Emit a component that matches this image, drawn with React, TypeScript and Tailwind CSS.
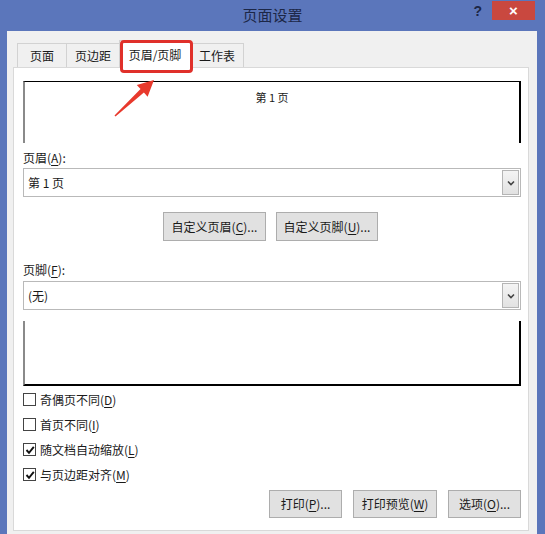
import React from "react";

function Chevron() {
  return (
    <svg width="8" height="6" viewBox="0 0 8 6">
      <path d="M1 1.5 L4 4.5 L7 1.5" fill="none" stroke="#444" strokeWidth="1.6" />
    </svg>
  );
}

function Select({ value }: { value: string }) {
  return (
    <div className="h-[29px] border border-[#b9b9b9] bg-white flex items-center justify-between pl-[4px] pr-[1px]">
      <span>{value}</span>
      <div className="w-[17px] h-[25px] border border-[#b5b5b5] bg-gradient-to-b from-[#f4f4f4] to-[#e2e2e2] flex items-center justify-center">
        <Chevron />
      </div>
    </div>
  );
}

function Check({ checked, children }: { checked?: boolean; children: React.ReactNode }) {
  return (
    <div className="h-[25px] flex items-center">
      <div className="w-[13px] h-[13px] border border-[#444] bg-white flex items-center justify-center">
        {checked && (
          <svg width="10" height="10" viewBox="0 0 10 10">
            <path d="M1.5 5 L4 7.8 L8.8 1.8" fill="none" stroke="#111" strokeWidth="1.9" />
          </svg>
        )}
      </div>
      <span className="ml-[4px]">{children}</span>
    </div>
  );
}

function Btn({ w, children }: { w: string; children: React.ReactNode }) {
  return (
    <div className={`${w} h-full border border-[#adadad] bg-[#e1e1e1] flex items-center justify-center`}>
      {children}
    </div>
  );
}

export default function App() {
  return (
    <div className="relative w-[545px] h-[534px] overflow-hidden bg-[#5b76bb] flex flex-col text-[12px] leading-[16px] text-[#1a1a1a] font-['Noto_Sans_CJK_SC','Noto_Sans',sans-serif]">
      {/* title bar */}
      <div className="h-[31px] grid grid-cols-[1fr_auto_1fr] items-start">
        <div />
        <div className="pt-[5px] text-[15px] leading-[20px] text-[#1c2747]">页面设置</div>
        <div className="flex justify-end items-start pr-[10px]">
          <span className="mt-[3px] mr-[10px] text-[14px] leading-[16px] font-bold text-[#1c2747] font-['Liberation_Sans',sans-serif]">?</span>
          <div className="mt-[1px] w-[43px] h-[19px] bg-[#c9483f] flex items-center justify-center text-white text-[15px] font-bold font-['Liberation_Sans',sans-serif]">
            ×
          </div>
        </div>
      </div>

      {/* window body */}
      <div className="ml-[7px] mr-[8px] flex-1 bg-[#f0f0f0] pl-[6px] pr-[8px] pt-[9px] flex flex-col">
        {/* tabs */}
        <div className="h-[28px] pl-[4px] flex items-end relative z-10 -mb-px">
          <div className="w-[50px] h-[24px] mb-px border border-b-0 border-[#d2d2d2] bg-[#f0f0f0] flex items-center justify-center">页面</div>
          <div className="w-[54px] h-[24px] mb-px -ml-px border border-b-0 border-[#d2d2d2] bg-[#f0f0f0] flex items-center justify-center">页边距</div>
          <div className="w-[72px] h-[28px] -ml-px border border-b-0 border-[#d2d2d2] bg-white flex items-center justify-center">页眉/页脚</div>
          <div className="w-[54px] h-[24px] mb-px -ml-px border border-b-0 border-[#d2d2d2] bg-[#f0f0f0] flex items-center justify-center">工作表</div>
        </div>

        {/* panel */}
        <div className="flex-1 mb-[3px] border border-[#d9d9d9] bg-white pl-[9px] pr-[7px] pt-[13px] flex flex-col">
          <div className="h-[62px] border-t border-t-black border-l-2 border-l-[#8a8a8a] border-r-2 border-r-black flex justify-center pt-[8px]">
            <span className="text-[11px] leading-[14px]">第 1 页</span>
          </div>

          <div className="mt-[7px] mb-[2px]">
            页眉(<u className="underline-offset-2">A</u>):
          </div>
          <Select value="第 1 页" />

          <div className="mt-[15px] h-[29px] flex justify-center gap-[10px] pr-[3px]">
            <Btn w="w-[103px]">
              自定义页眉(<u className="underline-offset-2">C</u>)...
            </Btn>
            <Btn w="w-[102px]">
              自定义页脚(<u className="underline-offset-2">U</u>)...
            </Btn>
          </div>

          <div className="mt-[21px] mb-[3px]">
            页脚(<u className="underline-offset-2">F</u>):
          </div>
          <Select value="(无)" />

          <div className="mt-[11px] h-[65px] border-l-2 border-l-[#8a8a8a] border-r-2 border-r-black border-b-2 border-b-black" />

          <div className="mt-px flex flex-col">
            <Check>
              奇偶页不同(<u className="underline-offset-2">D</u>)
            </Check>
            <Check>
              首页不同(<u className="underline-offset-2">I</u>)
            </Check>
            <Check checked>
              随文档自动缩放(<u className="underline-offset-2">L</u>)
            </Check>
            <Check checked>
              与页边距对齐(<u className="underline-offset-2">M</u>)
            </Check>
          </div>

          <div className="mt-[3px] h-[28px] flex justify-end gap-[11px]">
            <Btn w="w-[73px]">
              打印(<u className="underline-offset-2">P</u>)...
            </Btn>
            <Btn w="w-[84px]">
              打印预览(<u className="underline-offset-2">W</u>)
            </Btn>
            <Btn w="w-[73px]">
              选项(<u className="underline-offset-2">O</u>)...
            </Btn>
          </div>
        </div>
      </div>

      {/* annotation: red box around the active tab */}
      <div className="absolute z-20 left-[120px] top-[40px] w-[73px] h-[33px] border-[3px] border-[#e0302a] rounded-[4px]" />
      {/* annotation: red arrow */}
      <svg className="absolute z-20 left-[110px] top-[75px]" width="50" height="45" viewBox="0 0 50 45">
        <polygon
          points="4.5,40.5 30.5,14 26.8,9.9 44,5 37.6,21.7 33.9,17.6 5.5,41.5"
          fill="#e8392c"
        />
      </svg>
    </div>
  );
}
